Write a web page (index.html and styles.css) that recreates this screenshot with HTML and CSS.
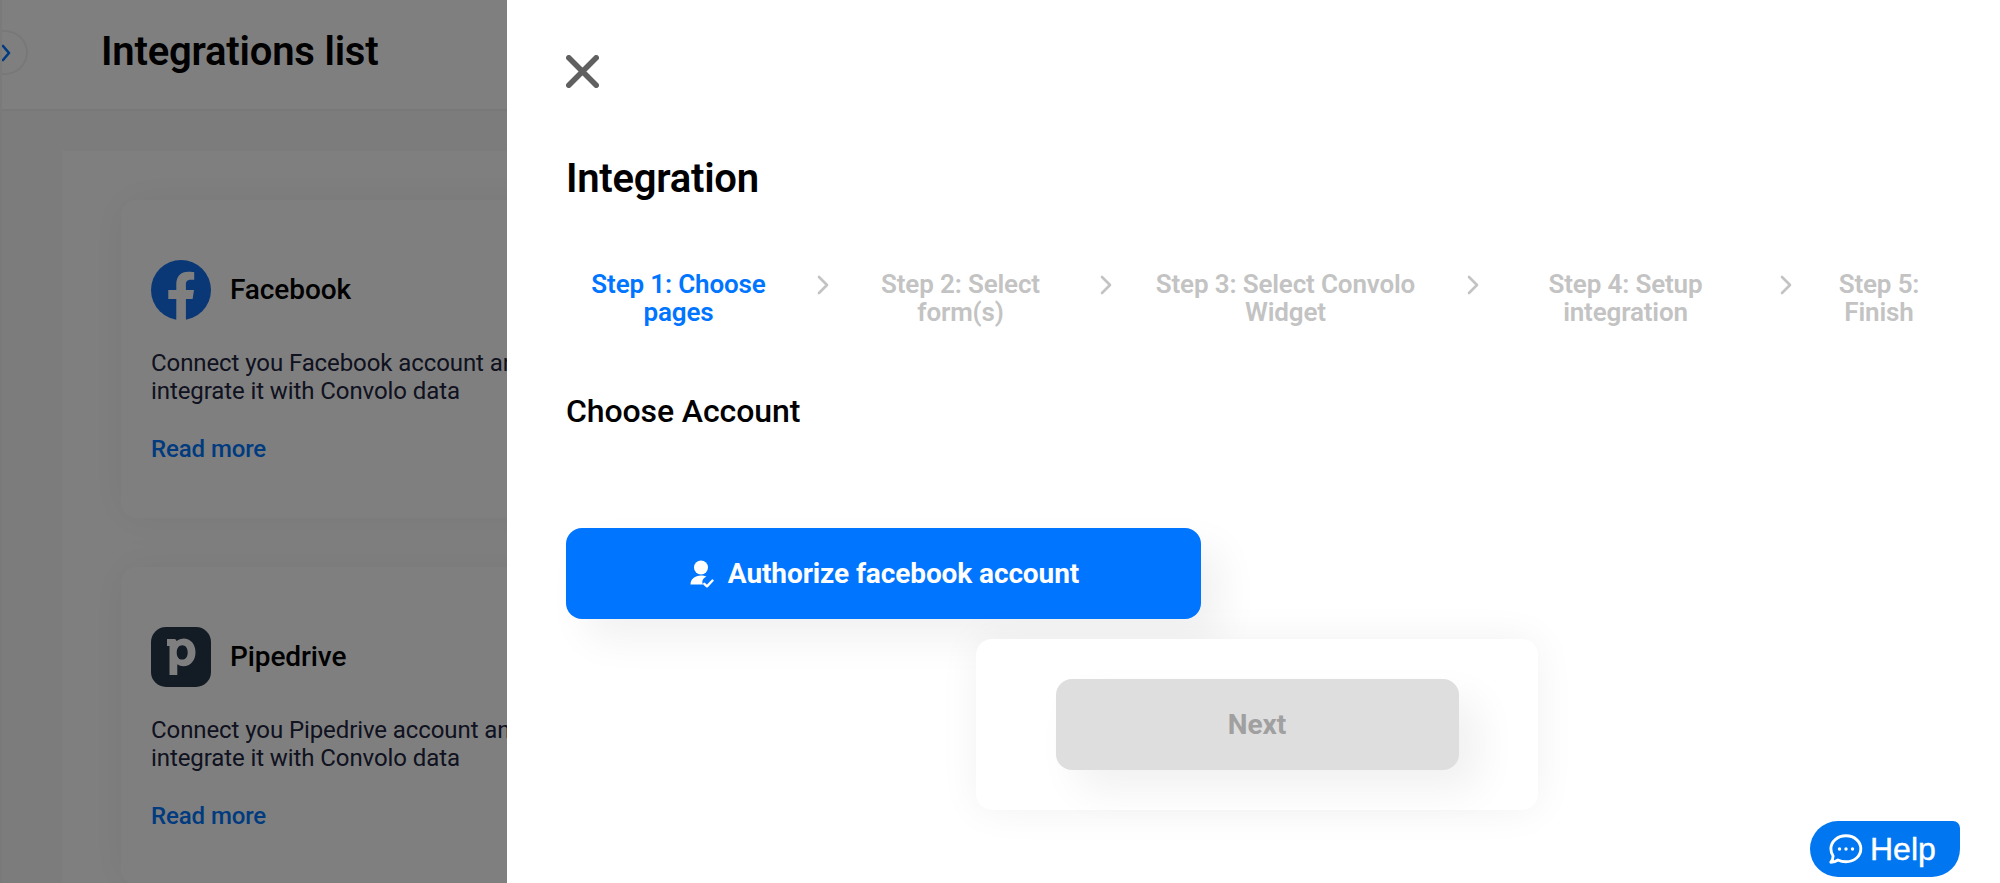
FILE: index.html
```html
<!DOCTYPE html>
<html lang="en">
<head>
    <meta charset="UTF-8">
    <meta name="viewport" content="width=device-width, initial-scale=1.0">
    <title>Integrations list</title>
    <link rel="stylesheet" href="styles.css">
</head>
<body>
    <div class="page">
        <header class="page-header">
            <button class="sidebar-toggle" aria-label="Open menu">
                <svg width="9" height="18" viewBox="0 0 9 18"><path d="M1 2l6 7-6 7" fill="none" stroke="#0075ff" stroke-width="2.6" stroke-linecap="round" stroke-linejoin="round"/></svg>
            </button>
            <h1>Integrations list</h1>
        </header>

        <main class="content">
            <div class="panel">
                <!-- Facebook -->
                <div class="card">
                    <div class="card-header">
                        <svg class="card-logo" viewBox="0 0 60 60">
                            <circle cx="30" cy="30" r="30" fill="#1470ec"/>
                            <path d="M25.3 60V39H17.300V29.900H25.300V24.500C25.300 16 30 11.800 37.200 11.800C40.300 11.800 43.200 12.200 43.200 12.200V19.800H39.500C36 19.800 34.900 22 34.900 24.400V29.900H43L41.600 39H34.900V60Z" fill="#fff"/>
                        </svg>
                        <span class="card-title">Facebook</span>
                        <button class="card-btn"></button>
                    </div>
                    <p class="card-text">Connect you Facebook account and<br>integrate it with Convolo data</p>
                    <a class="card-link" href="#">Read more</a>
                </div>

                <!-- Pipedrive -->
                <div class="card">
                    <div class="card-header">
                        <svg class="card-logo" viewBox="0 0 60 60">
                            <rect width="60" height="60" rx="15" fill="#26364a"/>
                            <path d="M16 12H23.500Q25 12 25.500 14Q28.500 11.500 32.500 11.500C39.500 11.500 44.500 17 44.500 25.300C44.500 33.500 39.500 39.200 32.500 39.200Q28.700 39.200 26.300 37.200V48H18.500V19H16ZM31.200 18.200C28 18.200 25.700 21 25.700 25.400C25.700 30 28 32.600 31.200 32.600C34.500 32.600 36.700 29.800 36.700 25.400C36.700 21 34.500 18.200 31.200 18.200Z" fill="#fff" fill-rule="evenodd"/>
                        </svg>
                        <span class="card-title">Pipedrive</span>
                        <button class="card-btn"></button>
                    </div>
                    <p class="card-text">Connect you Pipedrive account and<br>integrate it with Convolo data</p>
                    <a class="card-link" href="#">Read more</a>
                </div>
            </div>
        </main>
    </div>

    <div class="overlay"></div>

    <aside class="drawer">
        <button class="drawer-close" aria-label="Close">
            <svg width="33" height="33" viewBox="0 0 32 32"><path d="M2.700 2.700L29.300 29.300M29.300 2.700L2.700 29.300" stroke="#606060" stroke-width="5.300" stroke-linecap="round"/></svg>
        </button>
        <h2>Integration</h2>

        <div class="steps">
            <div class="step active">Step 1: Choose pages</div>
            <svg class="step-arrow" viewBox="0 0 12 20"><path d="M2 2l8 8-8 8"/></svg>
            <div class="step">Step 2: Select form(s)</div>
            <svg class="step-arrow" viewBox="0 0 12 20"><path d="M2 2l8 8-8 8"/></svg>
            <div class="step">Step 3: Select Convolo Widget</div>
            <svg class="step-arrow" viewBox="0 0 12 20"><path d="M2 2l8 8-8 8"/></svg>
            <div class="step">Step 4: Setup integration</div>
            <svg class="step-arrow" viewBox="0 0 12 20"><path d="M2 2l8 8-8 8"/></svg>
            <div class="step">Step 5: Finish</div>
        </div>

        <h3>Choose Account</h3>

        <button class="btn btn-primary">
            <svg width="24" height="28" viewBox="0 0 24 28">
                <circle cx="11" cy="7.500" r="7" fill="#fff"/>
                <path d="M.5 24.500C.5 19 5 15.500 11 15.500C13.200 15.500 15 15.900 16.500 16.700C14 17.500 12.300 19.500 12.300 22C12.300 23 12.600 23.800 13 24.500Z" fill="#fff"/>
                <path d="M14.300 23.800L17 26.300L22.500 20.500" fill="none" stroke="#fff" stroke-width="2.400" stroke-linecap="round" stroke-linejoin="round"/>
            </svg>
            Authorize facebook account
        </button>

        <div class="drawer-footer">
            <button class="btn btn-next" disabled>Next</button>
        </div>
    </aside>

    <button class="help">
        <svg width="34" height="30" viewBox="0 0 34 30">
            <path d="M17 1.800C25.500 1.800 31.800 7.500 31.800 14.800S25.500 27.800 17 27.800C13.800 27.800 11.300 27.200 9 26C7 27.500 4.500 28.200 1.800 28.200C3.300 26.500 4.100 24.500 4.100 22C2.700 20 1.900 17.600 1.900 14.800C1.900 7.500 8.500 1.800 17 1.800Z" fill="none" stroke="#fff" stroke-width="2.900" stroke-linejoin="round"/>
            <g fill="#fff"><circle cx="10.500" cy="15" r="1.700"/><circle cx="17" cy="15" r="1.700"/><circle cx="23.500" cy="15" r="1.700"/></g>
        </svg>
        <span>Help</span>
    </button>
</body>
</html>
```
FILE: styles.css
```css
* {
    box-sizing: border-box;
}

body {
    margin: 0;
    height: 883px;
    overflow: hidden;
    font-family: Roboto, sans-serif;
    color: #000;
    background: #fff;
}

h1, h2, h3, p {
    margin: 0;
    font-weight: 600;
}

button {
    border: none;
    padding: 0;
    font-family: inherit;
    cursor: pointer;
}

svg {
    display: block;
    flex-shrink: 0;
}

/* Page behind the drawer */
.page {
    height: 883px;
    overflow: hidden;
    border-left: 2px solid #f5f5f5;
}

.page-header {
    position: relative;
    height: 111px;
    padding: 28px 0 0 99px;
    border-bottom: 2px solid #f0f0f0;
}

.page-header h1 {
    font-size: 40px;
    line-height: 48px;
    letter-spacing: -0.2px;
}

.sidebar-toggle {
    position: absolute;
    left: -20px;
    top: 30px;
    width: 46px;
    height: 45px;
    padding-left: 18px;
    border: 2px solid #f0f0f0;
    border-radius: 50%;
    background: #fff;
}

.content {
    padding: 40px 0 0 60px;
    background: #f8f8f8;
}

.panel {
    display: flex;
    flex-direction: column;
    gap: 49px;
    padding: 49px 59px;
    background: #fff;
}

.card {
    width: 560px;
    height: 318px;
    padding: 60px 30px;
    border-radius: 16px;
    background: #fff;
    box-shadow: 0 0 40px rgba(0, 0, 0, 0.06);
}

.card-header {
    display: flex;
    align-items: center;
    height: 60px;
}

.card-logo {
    width: 60px;
    height: 60px;
    margin-right: 19px;
}

.card-title {
    margin-top: -2px;
    font-size: 28px;
    font-weight: 500;
    letter-spacing: -0.1px;
}

.card-btn {
    width: 120px;
    height: 44px;
    margin-left: auto;
    margin-right: -78px;
    border-radius: 18px;
    background: #0075ff;
}

.card-text {
    margin: 29px 0 30px;
    font-size: 24px;
    font-weight: 400;
    line-height: 28px;
    letter-spacing: -0.09px;
    color: #20243f;
    white-space: nowrap;
}

.card-link {
    font-size: 24px;
    font-weight: 500;
    line-height: 28px;
    letter-spacing: -0.1px;
    color: #0075ff;
    text-decoration: none;
}

.overlay {
    position: fixed;
    inset: 0;
    background: rgba(0, 0, 0, 0.5);
}

/* Drawer */
.drawer {
    position: fixed;
    top: 0;
    right: 0;
    bottom: 0;
    width: 1493px;
    padding: 55px 60px 0 59px;
    background: #fff;
}

.drawer-close {
    display: block;
    background: none;
}

.drawer h2 {
    margin-top: 67px;
    font-size: 40px;
    line-height: 48px;
    letter-spacing: -0.25px;
}

.steps {
    display: grid;
    grid-template-columns: 211px 70px 213px 70px 297px 70px 243px 70px 124px;
    margin: 67px 0 0 7px;
}

.step {
    padding: 0 16px;
    font-size: 26px;
    font-weight: 600;
    line-height: 28px;
    letter-spacing: -0.15px;
    text-align: center;
    color: #c3c3c3;
}

.step.active {
    color: #0075ff;
}

.step-arrow {
    width: 12px;
    height: 20px;
    margin: 5px 0 0 33px;
    fill: none;
    stroke: #c3c3c3;
    stroke-width: 2.6;
    stroke-linecap: round;
    stroke-linejoin: round;
}

.drawer h3 {
    margin-top: 66px;
    font-size: 32px;
    font-weight: 500;
    line-height: 38px;
    letter-spacing: -0.1px;
}

.btn {
    display: flex;
    align-items: center;
    justify-content: center;
    height: 91px;
    border-radius: 16px;
    font-size: 28px;
    font-weight: 700;
    box-shadow: 20px 20px 40px rgba(0, 0, 0, 0.06);
}

.btn-primary {
    gap: 14px;
    width: 635px;
    margin-top: 98px;
    padding-left: 2px;
    letter-spacing: -0.1px;
    color: #fff;
    background: #0075ff;
}

.btn-next {
    width: 403px;
    color: #a0a0a0;
    background: #dedede;
}

.drawer-footer {
    position: relative;
    display: flex;
    justify-content: center;
    width: 562px;
    margin: 20px 0 0 410px;
    padding: 40px 0;
    border-radius: 16px;
    background: #fff;
    box-shadow: 0 0 40px rgba(0, 0, 0, 0.06);
}

/* Help widget */
.help {
    position: fixed;
    right: 40px;
    bottom: 6px;
    display: flex;
    align-items: center;
    gap: 7px;
    width: 150px;
    height: 56px;
    padding-left: 19px;
    border-radius: 28px 7px 28px 28px;
    font-family: "Liberation Sans", sans-serif;
    font-size: 32px;
    color: #fff;
    background: #0077f0;
    -webkit-text-stroke: 0.4px #fff;
}
```
